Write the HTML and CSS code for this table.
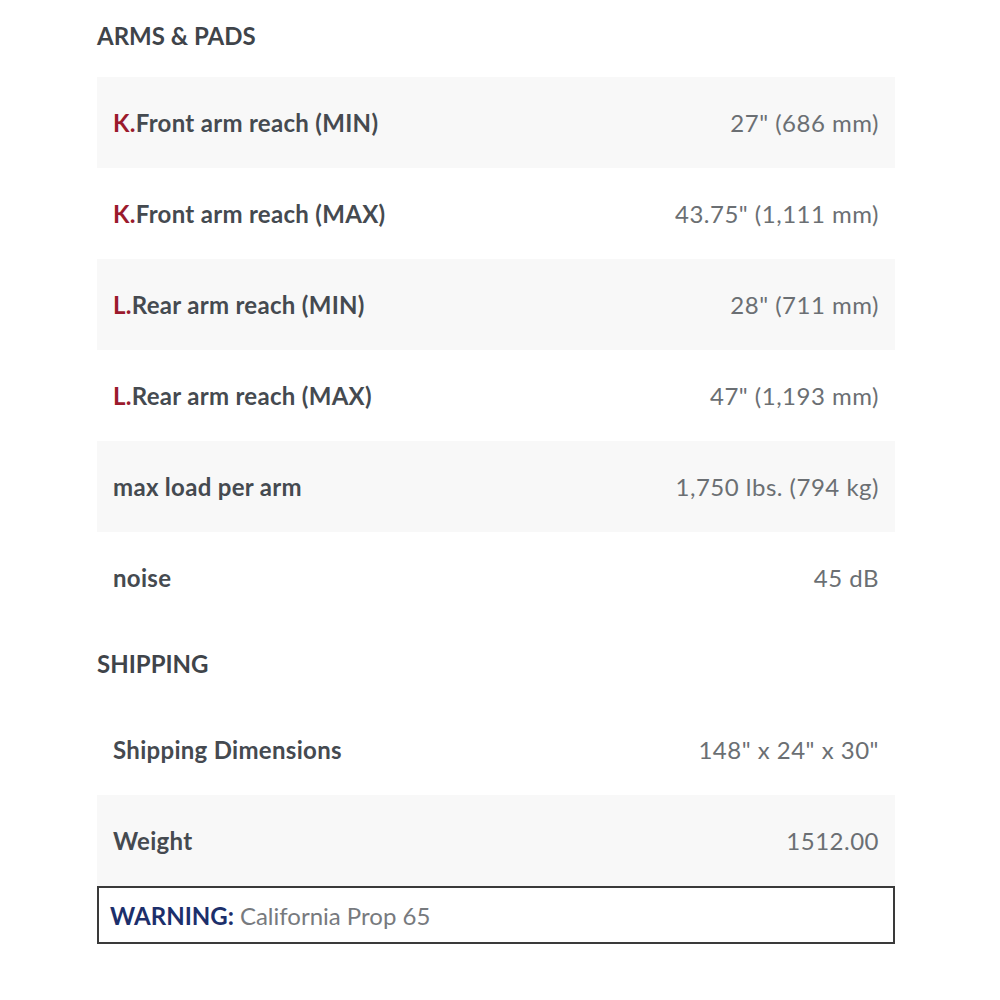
FILE: index.html
```html
<!DOCTYPE html>
<html>
<head>
<meta charset="utf-8">
<link rel="stylesheet" href="styles.css">
</head>
<body>
<div class="specs">
  <h2 class="group-title first">ARMS &amp; PADS</h2>
  <div class="table">
    <div class="row shade"><span class="label"><span class="key">K.</span>Front arm reach (MIN)</span><span class="value">27" (686 mm)</span></div>
    <div class="row"><span class="label"><span class="key">K.</span>Front arm reach (MAX)</span><span class="value">43.75" (1,111 mm)</span></div>
    <div class="row shade"><span class="label"><span class="key">L.</span>Rear arm reach (MIN)</span><span class="value">28" (711 mm)</span></div>
    <div class="row"><span class="label"><span class="key">L.</span>Rear arm reach (MAX)</span><span class="value">47" (1,193 mm)</span></div>
    <div class="row shade"><span class="label">max load per arm</span><span class="value">1,750 lbs. (794 kg)</span></div>
    <div class="row"><span class="label">noise</span><span class="value">45 dB</span></div>
  </div>
  <h2 class="group-title">SHIPPING</h2>
  <div class="table">
    <div class="row"><span class="label">Shipping Dimensions</span><span class="value">148" x 24" x 30"</span></div>
    <div class="row shade"><span class="label">Weight</span><span class="value">1512.00</span></div>
  </div>
  <div class="warning"><strong>WARNING:</strong> California Prop 65</div>
</div>
</body>
</html>
```
FILE: styles.css
```css
html, body {
  margin: 0;
  padding: 0;
  background: #ffffff;
}
body {
  font-family: Lato, "Open Sans", sans-serif;
  color: #454a50;
}
.specs {
  width: 798px;
  margin-left: 97px;
}
.group-title {
  margin: 0;
  padding: 26px 0 25px;
  line-height: 30px;
  font-size: 24px;
  font-weight: 700;
  color: #3f444a;
}
.group-title.first {
  padding-top: 21px;
  padding-bottom: 26px;
}
.table {
  display: flex;
  flex-direction: column;
}
.row {
  height: 91px;
  display: flex;
  align-items: center;
  justify-content: space-between;
  padding: 0 16px;
  font-size: 24px;
}
.row.shade {
  background: #f8f8f8;
}
.label {
  font-weight: 700;
  color: #454a50;
  letter-spacing: 0.3px;
}
.key {
  color: #9b1a2c;
}
.value {
  color: #6b6f73;
  font-weight: 400;
  letter-spacing: 0.5px;
}
.warning {
  box-sizing: border-box;
  height: 58px;
  border: 2px solid #3a3a3a;
  display: flex;
  align-items: center;
  padding: 0 11px;
  font-size: 24px;
  color: #777a7e;
}
.warning strong {
  color: #1c2f6b;
  font-weight: 700;
  margin-right: 6px;
}
```
